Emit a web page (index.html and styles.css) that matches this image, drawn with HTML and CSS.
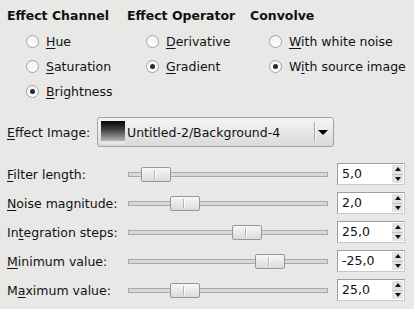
FILE: index.html
```html
<!DOCTYPE html>
<html lang="en">
<head>
    <meta charset="UTF-8">
    <title>Van Gogh (LIC)</title>
    <link rel="stylesheet" href="styles.css">
</head>
<body>

    <div class="dialog">
        <div class="options">
            <div class="group">
                <div class="group-title">Effect Channel</div>
                <div class="radio"><span class="dot"></span><span><u>H</u>ue</span></div>
                <div class="radio"><span class="dot"></span><span><u>S</u>aturation</span></div>
                <div class="radio on"><span class="dot"></span><span><u>B</u>rightness</span></div>
            </div>
            <div class="group">
                <div class="group-title">Effect Operator</div>
                <div class="radio"><span class="dot"></span><span><u>D</u>erivative</span></div>
                <div class="radio on"><span class="dot"></span><span><u>G</u>radient</span></div>
            </div>
            <div class="group">
                <div class="group-title">Convolve</div>
                <div class="radio"><span class="dot"></span><span><u>W</u>ith white noise</span></div>
                <div class="radio on"><span class="dot"></span><span>W<u>i</u>th source image</span></div>
            </div>
        </div>

        <div class="image-row">
            <span class="image-label"><u>E</u>ffect Image:</span>
            <div class="combo">
                <span class="swatch"></span>
                <span class="combo-text">Untitled-2/Background-4</span>
                <span class="combo-sep"></span>
                <span class="combo-arrow"></span>
            </div>
        </div>

        <div class="params">
            <div class="param">
                <span class="param-label"><u>F</u>ilter length:</span>
                <div class="slider"><span class="handle" style="left: 12px"></span></div>
                <div class="spin"><span class="spin-value">5,0</span><span class="spin-arrows"><i class="up"></i><i class="down"></i></span></div>
            </div>
            <div class="param">
                <span class="param-label"><u>N</u>oise magnitude:</span>
                <div class="slider"><span class="handle" style="left: 41px"></span></div>
                <div class="spin"><span class="spin-value">2,0</span><span class="spin-arrows"><i class="up"></i><i class="down"></i></span></div>
            </div>
            <div class="param">
                <span class="param-label">In<u>t</u>egration steps:</span>
                <div class="slider"><span class="handle" style="left: 103px"></span></div>
                <div class="spin"><span class="spin-value">25,0</span><span class="spin-arrows"><i class="up"></i><i class="down"></i></span></div>
            </div>
            <div class="param">
                <span class="param-label"><u>M</u>inimum value:</span>
                <div class="slider"><span class="handle" style="left: 126px"></span></div>
                <div class="spin"><span class="spin-value">-25,0</span><span class="spin-arrows"><i class="up"></i><i class="down"></i></span></div>
            </div>
            <div class="param">
                <span class="param-label">M<u>a</u>ximum value:</span>
                <div class="slider"><span class="handle" style="left: 41px"></span></div>
                <div class="spin"><span class="spin-value">25,0</span><span class="spin-arrows"><i class="up"></i><i class="down"></i></span></div>
            </div>
        </div>
    </div>

</body>
</html>
```

FILE: styles.css
```css
body{ margin: 0; background: #e8e8e7; color: #111; font: 12.5px "DejaVu Sans", "Liberation Sans", sans-serif; }
u{ text-decoration-thickness: 1px; text-underline-offset: 2px; }

.dialog{
    padding: 8px 0 0 7px;
}

/* radio groups */
.options{
    display: grid;
    grid-template-columns: 120px 123px auto;
}

.group-title{
    font-weight: bold;
    height: 16px;
    line-height: 16px;
    margin-bottom: 5px;
}

.radio{
    display: flex;
    align-items: center;
    gap: 7px;
    height: 25px;
    padding-left: 19px;
}

.radio .dot{
    width: 11px;
    height: 11px;
    border: 1px solid #a2a2a2;
    border-radius: 50%;
    background: linear-gradient(#f2f2f2, #fff);
    display: flex;
    align-items: center;
    justify-content: center;
}

.radio.on .dot::after{
    content: '';
    width: 5px;
    height: 5px;
    border-radius: 50%;
    background: #2a2a2a;
}

/* effect image combo */
.image-row{
    display: flex;
    align-items: center;
    margin-top: 13px;
    height: 30px;
}

.image-label{
    width: 90px;
}

.combo{
    width: 237px;
    height: 30px;
    box-sizing: border-box;
    border: 1px solid #a4a4a4;
    border-radius: 3px;
    background: linear-gradient(#f5f5f5, #dadada);
    display: flex;
    align-items: center;
    padding-left: 3px;
}

.swatch{
    width: 24px;
    height: 23px;
    background: linear-gradient(#050505, #3a3a3a 35%, #b0b0b0 85%, #e6e6e6 86%, #e6e6e6);
    margin-right: 2px;
}

.combo-text{
    flex: 1;
}

.combo-sep{
    width: 1px;
    height: 20px;
    background: #a9a9a9;
    box-shadow: 1px 0 #fafafa;
}

.combo-arrow{
    width: 0;
    height: 0;
    border-top: 5px solid #000;
    border-left: 5px solid transparent;
    border-right: 5px solid transparent;
    margin: 1px 5px 0 3px;
}

/* sliders + spin buttons */
.params{
    margin-top: 16px;
    display: flex;
    flex-direction: column;
    gap: 7px;
}

.param{
    display: flex;
    align-items: center;
    height: 22px;
}

.param-label{
    width: 121px;
}

.slider{
    position: relative;
    width: 200px;
    height: 5px;
    box-sizing: border-box;
    border: 1px solid #aaa;
    background: #d8d8d8;
}

.handle{
    position: absolute;
    top: -6px;
    width: 30px;
    height: 15px;
    box-sizing: border-box;
    border: 1px solid #979797;
    border-radius: 2px;
    background: linear-gradient(#f8f8f8, #dadada);
}

.handle::after{
    content: '';
    position: absolute;
    left: 13px;
    top: 2px;
    width: 1px;
    height: 9px;
    background: #fff;
    box-shadow: -1px 0 #b5b5b5;
}

.spin{
    margin-left: 9px;
    width: 68px;
    height: 22px;
    box-sizing: border-box;
    border: 1px solid #9e9e9e;
    border-right-color: #c8c8c8;
    border-bottom-color: #c8c8c8;
    background: #fff;
    display: flex;
}

.spin-value{
    flex: 1;
    padding-left: 4px;
    line-height: 20px;
}

.spin-arrows{
    width: 11px;
    margin: 1px 1px 1px 0;
    display: flex;
    flex-direction: column;
    background: #e4e4e4;
}

.spin-arrows i{
    flex: 1;
    display: flex;
    align-items: center;
    justify-content: center;
}

.spin-arrows i.up{
    border-bottom: 1px solid #c4c4c4;
}

.spin-arrows i::after{
    content: '';
    width: 0;
    height: 0;
    border-left: 3px solid transparent;
    border-right: 3px solid transparent;
}

.spin-arrows i.up::after{
    border-bottom: 4px solid #111;
}

.spin-arrows i.down::after{
    border-top: 4px solid #111;
}
```
